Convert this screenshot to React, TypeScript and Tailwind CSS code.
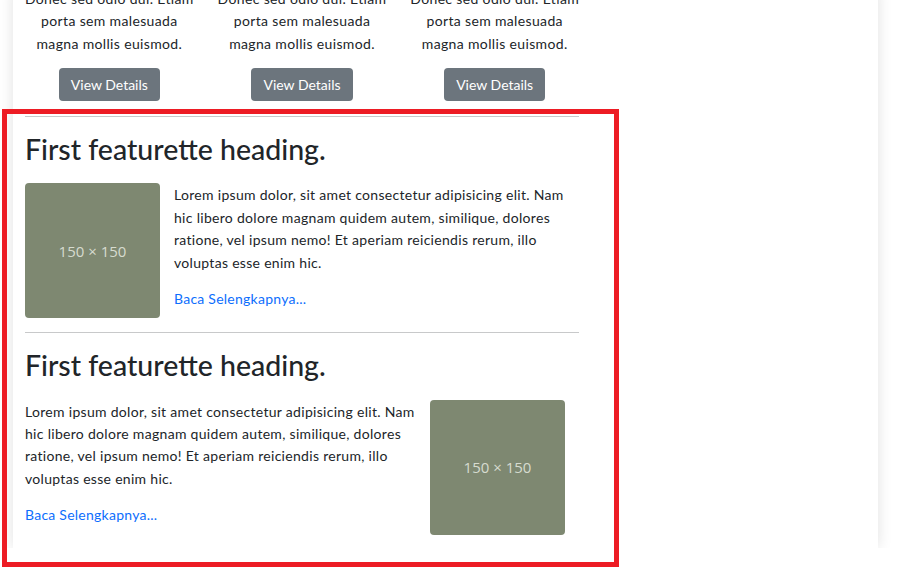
const lorem =
  "Lorem ipsum dolor, sit amet consectetur adipisicing elit. Nam hic libero dolore magnam quidem autem, similique, dolores ratione, vel ipsum nemo! Et aperiam reiciendis rerum, illo voluptas esse enim hic.";

function Placeholder() {
  return (
    <div className="flex h-[135px] w-[135px] shrink-0 items-center justify-center rounded-[4px] bg-[#7e8871] font-['Open_Sans',sans-serif] text-[15px] text-[#d6dbcf]">
      150 × 150
    </div>
  );
}

function Body() {
  return (
    <div className="min-w-0 flex-1 pt-px">
      <p className="mb-[12px] text-[14px] leading-[1.6] tracking-[0.3px]">{lorem}</p>
      <a href="#" className="text-[14px] leading-[1.6] tracking-[0.25px] text-[#0d6efd]">
        Baca Selengkapnya...
      </a>
    </div>
  );
}

function Featurette({ reverse }: { reverse?: boolean }) {
  return (
    <div>
      <hr className="mb-[15px] border-t border-[#c8c9ca]" />
      <h2 className="mb-[17px] text-[28.5px] font-medium leading-[1.2]">First featurette heading.</h2>
      {reverse ? (
        <div className="flex items-start gap-[14px] pr-[14px]">
          <Body />
          <Placeholder />
        </div>
      ) : (
        <div className="flex items-start gap-[14px]">
          <Placeholder />
          <Body />
        </div>
      )}
    </div>
  );
}

export default function App() {
  const cols = [1, 2, 3];
  return (
    <div className="relative h-[573px] overflow-hidden bg-white font-['Lato',sans-serif] text-[#212529]">
      <div className="ml-[13px] w-[865px] bg-white shadow-[0_0_14px_rgba(0,0,0,0.12)]">
        <div className="w-[578px] px-3 pb-[13px]">
          <div className="-mx-3 -mt-[12px] grid grid-cols-3">
            {cols.map((c) => (
              <div key={c} className="flex flex-col items-center px-3 text-center">
                <p className="whitespace-nowrap text-[14px] leading-[1.6] tracking-[0.35px]">
                  Donec sed odio dui. Etiam
                  <br />
                  porta sem malesuada
                  <br />
                  magna mollis euismod.
                </p>
                <button className="mt-[13px] rounded-[4px] bg-[#6c757d] px-3 py-[6px] text-[14px] leading-[21px] text-white">
                  View Details
                </button>
              </div>
            ))}
          </div>
          <div className="mt-[15px] flex flex-col gap-[14px]">
            <Featurette />
            <Featurette reverse />
          </div>
        </div>
      </div>
      <div className="relative z-10 h-[40px] bg-white" />
      <div className="absolute left-[2px] top-[109px] z-20 h-[458px] w-[617px] border-[5px] border-[#ed1c24]" />
    </div>
  );
}
